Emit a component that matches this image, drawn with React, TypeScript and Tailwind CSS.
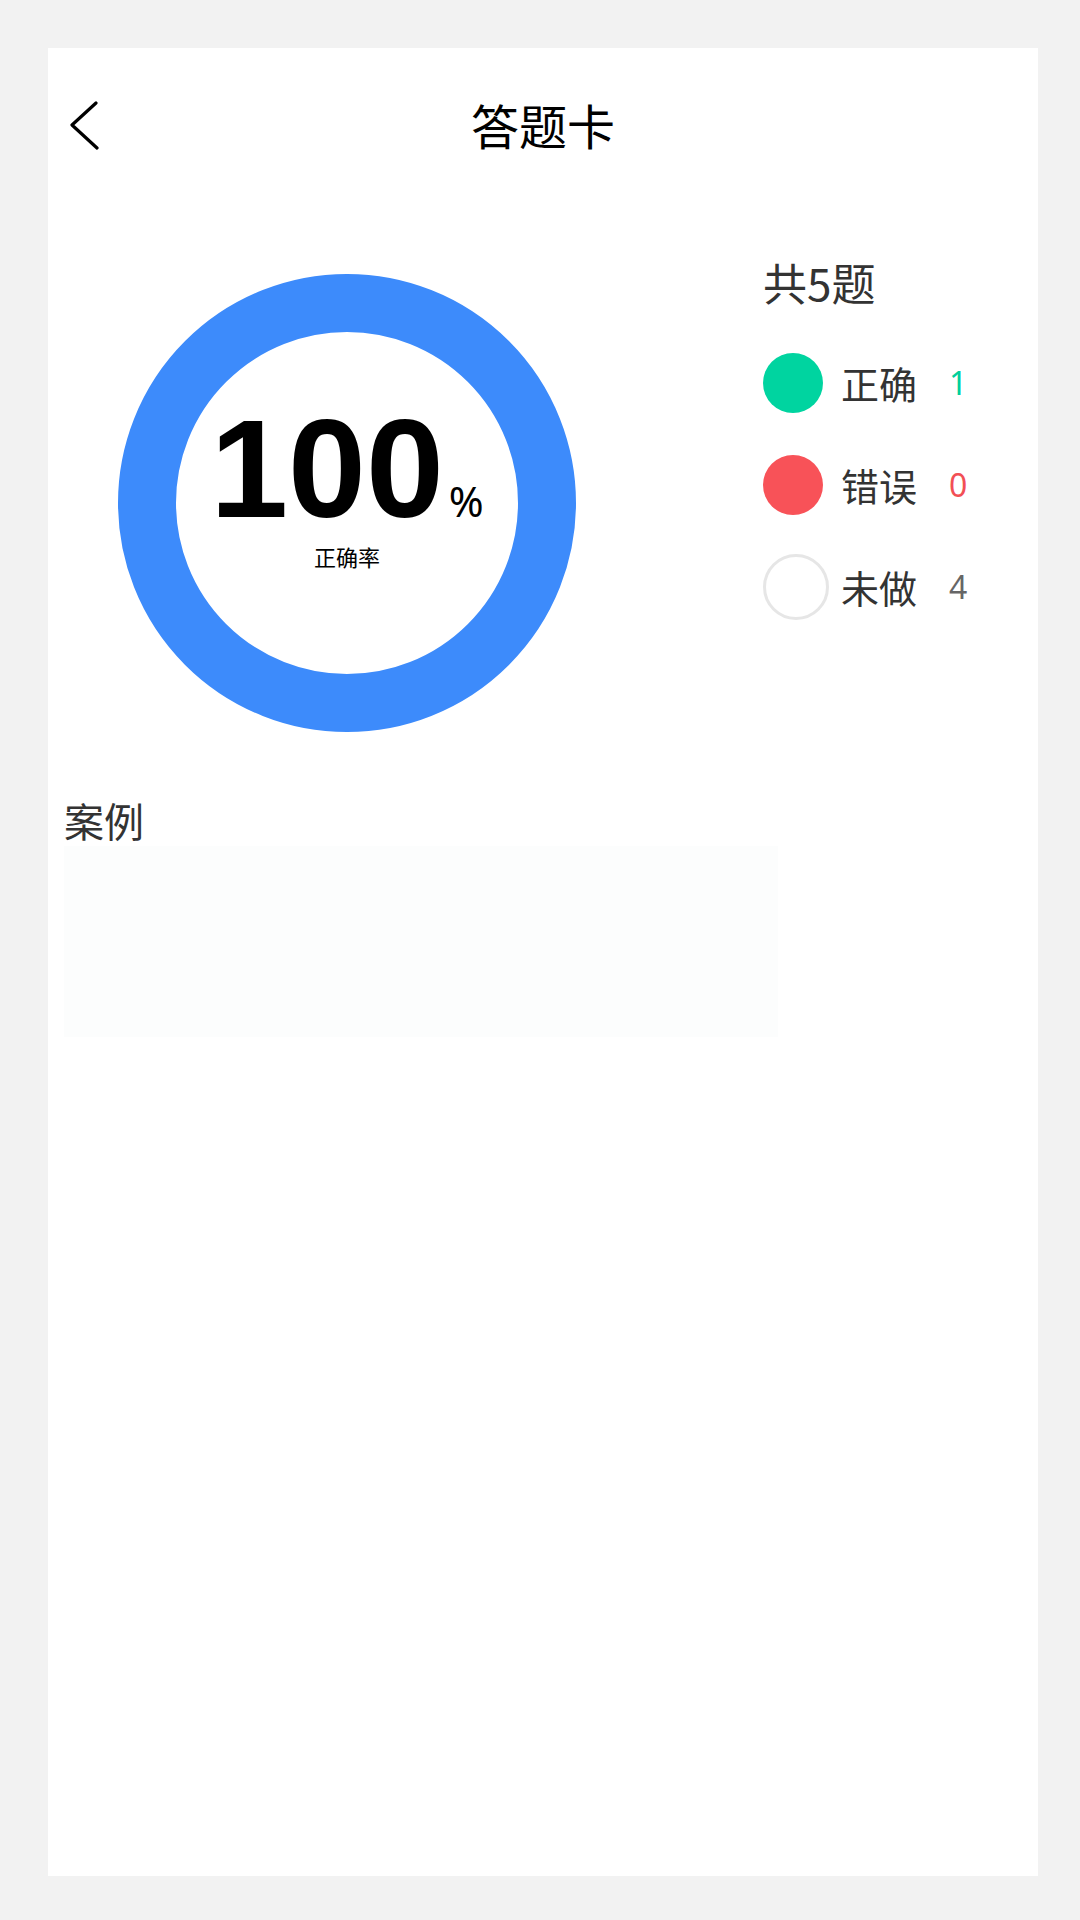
import React from "react";

const cjk = { fontFamily: '"Noto Sans CJK SC", "Noto Sans", sans-serif' };

function Legend({ color, label, count, countColor, hollow }: { color?: string; label: string; count: number; countColor: string; hollow?: boolean }) {
    return (
        <div className="flex h-[102px] items-center">
            <div className="flex w-[66px] items-center">
                {hollow ? (
                    <div className="h-[66px] w-[66px] rounded-full border-[3px] border-[#e6e6e6]" />
                ) : (
                    <div className="h-[60px] w-[60px] rounded-full" style={{ backgroundColor: color }} />
                )}
            </div>
            <span className="ml-[12px] w-[108px] text-[38px] leading-none text-[#333333]" style={cjk}>
                {label}
            </span>
            <span className="text-[32px] leading-none" style={{ color: countColor, fontFamily: '"Noto Sans", sans-serif' }}>
                {count}
            </span>
        </div>
    );
}

export default function App() {
    return (
        <div className="min-h-[1920px] w-[1080px] bg-[#f2f2f2] pb-[44px] pl-[48px] pr-[42px] pt-[48px]">
            <div className="h-[1828px] w-full bg-white">
                {/* header */}
                <div className="flex h-[104px] items-end">
                    <div className="relative flex h-[56px] w-full items-center justify-center">
                        <svg className="absolute left-[20px] top-[4px]" width="34" height="50" viewBox="0 0 34 50" fill="none">
                            <path d="M28 3 L4 25 L29 48" stroke="#000" strokeWidth="3.2" strokeLinecap="round" strokeLinejoin="round" />
                        </svg>
                        <h1 className="text-[48px] leading-none text-black" style={cjk}>
                            答题卡
                        </h1>
                    </div>
                </div>

                {/* chart + legend */}
                <div className="mt-[102px] flex items-start">
                    <div className="ml-[70px] mt-[20px] flex h-[458px] w-[458px] items-center justify-center rounded-full border-[58px] border-[#3d8bfb]">
                        <div className="flex flex-col items-center pb-[30px]">
                            <div className="flex items-baseline">
                                <span className="text-[140px] font-bold leading-[120px] text-black" style={{ fontFamily: '"Liberation Sans", Arial, sans-serif' }}>
                                    100
                                </span>
                                <span className="ml-[5px] text-[42px] leading-none text-black" style={{ fontFamily: '"Noto Sans", sans-serif' }}>
                                    %
                                </span>
                            </div>
                            <span className="mt-[16px] text-[22px] leading-none text-black" style={cjk}>
                                正确率
                            </span>
                        </div>
                    </div>

                    <div className="ml-[187px] flex flex-col">
                        <div className="flex h-[56px] items-center text-[44px] leading-none text-[#333333]" style={cjk}>
                            共5题
                        </div>
                        <div className="mt-[22px] flex flex-col">
                            <Legend color="#00d4a0" label="正确" count={1} countColor="#00cf9c" />
                            <Legend color="#f85258" label="错误" count={0} countColor="#f24f55" />
                            <Legend label="未做" count={4} countColor="#666666" hollow />
                        </div>
                    </div>
                </div>

                {/* case */}
                <div className="mt-[68px] px-[16px]">
                    <h2 className="text-[40px] leading-none text-[#333333]" style={cjk}>
                        案例
                    </h2>
                    <div className="mt-[6px] h-[191px] w-[714px] bg-[#fcfdfd]" />
                </div>
            </div>
        </div>
    );
}
